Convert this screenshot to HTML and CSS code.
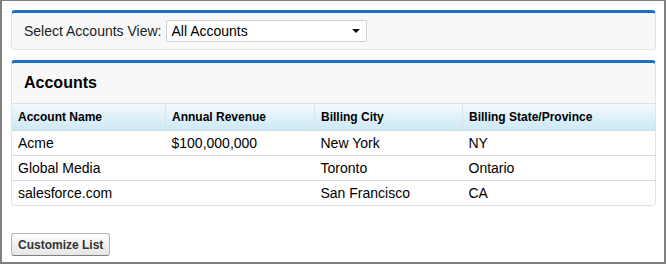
FILE: index.html
```html
<!DOCTYPE html>
<html lang="en">
<head>
    <meta charset="UTF-8">
    <meta name="viewport" content="width=device-width, initial-scale=1.0">
    <title>Accounts</title>
    <link rel="stylesheet" href="styles.css">
</head>
<body>
    <div class="frame">
        <div class="panel view-bar">
            <label for="view">Select Accounts View:</label>
            <span class="picker">
                <select id="view">
                    <option>All Accounts</option>
                    <option>My Accounts</option>
                    <option>Recently Viewed Accounts</option>
                </select>
            </span>
        </div>

        <div class="panel list">
            <h2>Accounts</h2>
            <table>
                <thead>
                    <tr>
                        <th class="c1">Account Name</th>
                        <th class="c2">Annual Revenue</th>
                        <th class="c3">Billing City</th>
                        <th>Billing State/Province</th>
                    </tr>
                </thead>
                <tbody>
                    <tr>
                        <td>Acme</td>
                        <td>$100,000,000</td>
                        <td>New York</td>
                        <td>NY</td>
                    </tr>
                    <tr>
                        <td>Global Media</td>
                        <td></td>
                        <td>Toronto</td>
                        <td>Ontario</td>
                    </tr>
                    <tr>
                        <td>salesforce.com</td>
                        <td></td>
                        <td>San Francisco</td>
                        <td>CA</td>
                    </tr>
                </tbody>
            </table>
        </div>

        <button class="btn">Customize List</button>
    </div>
</body>
</html>
```

FILE: styles.css
```css
html, body {
    margin: 0;
    padding: 0;
}
body {
    font-family: "Liberation Sans", Arial, sans-serif;
    color: #000;
    background: #fff;
}
.frame {
    box-sizing: border-box;
    width: 666px;
    height: 264px;
    border: 2px solid #7f7f7f;
    border-top-width: 1px;
    padding: 9px 8px 0 9px;
}
.panel {
    background: #f8f8f8;
    border: 1px solid #e0e3e5;
    border-top: 3px solid #1f70c1;
    border-radius: 4px;
}
.view-bar {
    display: flex;
    align-items: center;
    height: 36px;
    padding: 0 12px;
    font-size: 14px;
    color: #222;
}
.view-bar label {
    margin-right: 5px;
}
.picker {
    position: relative;
    display: inline-block;
}
.picker select {
    -webkit-appearance: none;
    appearance: none;
    box-sizing: border-box;
    width: 201px;
    height: 22px;
    margin: 0;
    padding: 0 20px 0 4px;
    font-family: "Liberation Sans", Arial, sans-serif;
    font-size: 14px;
    color: #000;
    background: #fff;
    border: 1px solid #d0d0d0;
    border-radius: 2px;
    outline: none;
}
.picker::after {
    content: "";
    position: absolute;
    right: 7px;
    top: 9px;
    border-left: 4px solid transparent;
    border-right: 4px solid transparent;
    border-top: 4px solid #111;
    pointer-events: none;
}
.list {
    margin-top: 10px;
    overflow: hidden;
}
.list h2 {
    margin: 0;
    height: 40px;
    line-height: 40px;
    padding-left: 12px;
    font-size: 16px;
    font-weight: bold;
    border-bottom: 1px solid #e0e0e0;
}
table {
    width: 100%;
    border-collapse: collapse;
    background: #fff;
}
th {
    height: 26px;
    padding: 0 6px;
    text-align: left;
    font-size: 12px;
    font-weight: bold;
    background: linear-gradient(#f2f9fc, #cde9f5);
    border-left: 1px solid #d9e3e8;
    border-bottom: 1px solid #d6dde0;
}
th:first-child {
    border-left: 0;
}
.c1 { width: 141px; }
.c2 { width: 136px; }
.c3 { width: 135px; }
td {
    height: 24px;
    padding: 0 6px;
    font-size: 14px;
    border-bottom: 1px solid #dcdcdc;
}
tbody tr:last-child td {
    border-bottom: 0;
}
.btn {
    display: block;
    margin-top: 27px;
    height: 23px;
    padding: 0 6px;
    font-family: "Liberation Sans", Arial, sans-serif;
    font-size: 12px;
    font-weight: bold;
    color: #333;
    background: linear-gradient(#fdfdfd, #e6e6e6);
    border: 1px solid #b5b5b5;
    border-bottom-color: #7f7f7f;
    border-radius: 3px;
}
```
